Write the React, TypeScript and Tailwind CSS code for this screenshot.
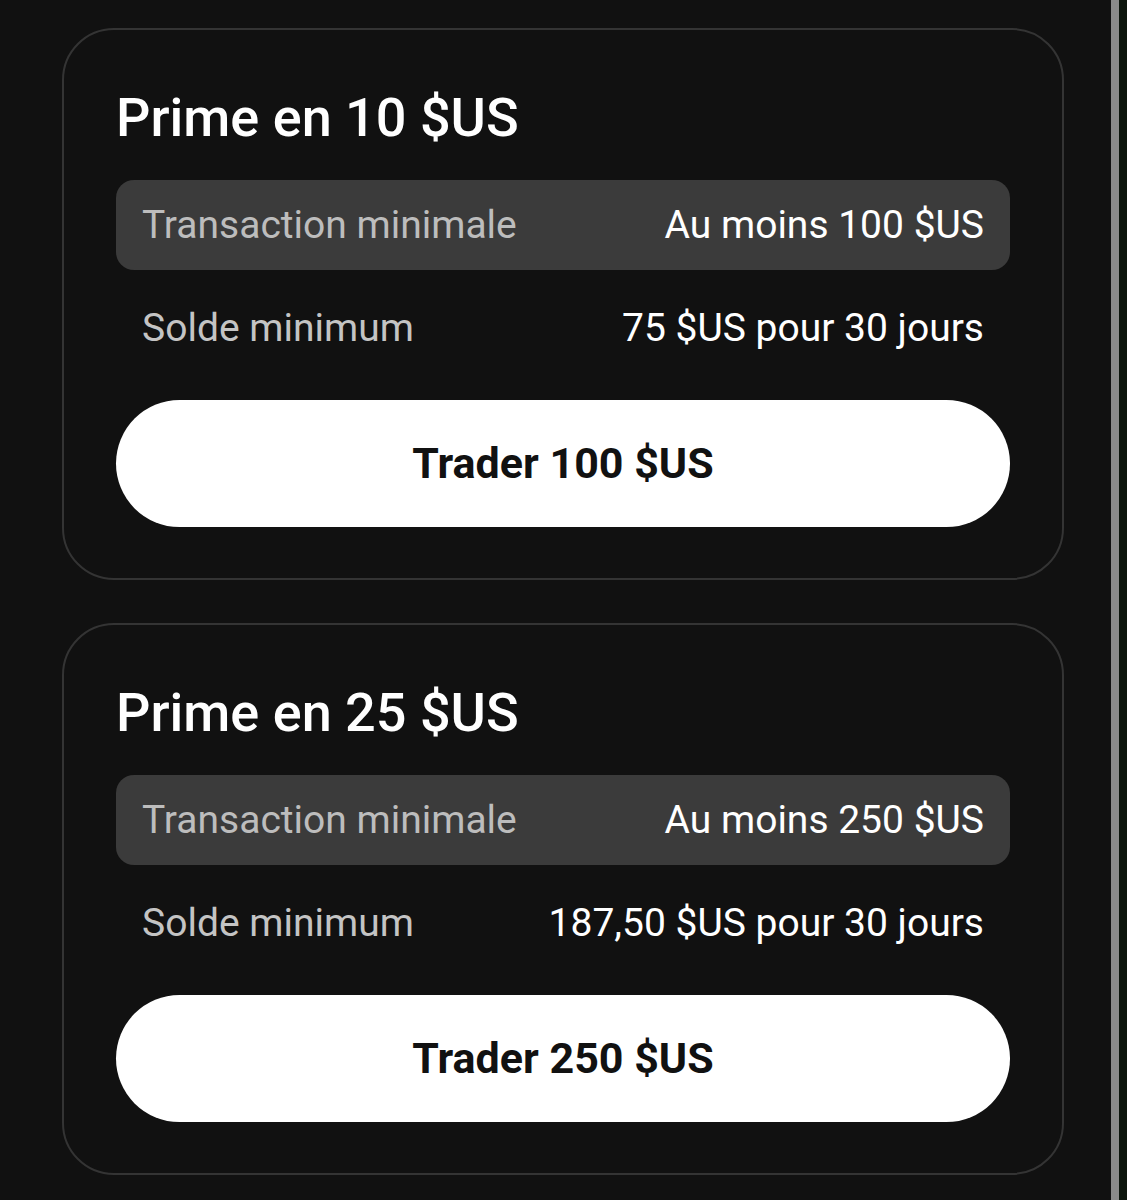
const offers = [
  { bonus: '10', min: 'Au moins 100 $US', balance: '75 $US pour 30 jours', trade: 'Trader 100 $US' },
  { bonus: '25', min: 'Au moins 250 $US', balance: '187,50 $US pour 30 jours', trade: 'Trader 250 $US' },
];

function OfferCard({ offer }: { offer: (typeof offers)[number] }) {
  return (
    <div className="border-2 border-[#343434] rounded-[52px] px-[52px] pt-[56px] pb-[51px]">
      <h2 className="text-[54px] leading-[64px] font-medium text-white">Prime en {offer.bonus} $US</h2>
      <div className="mt-[30px] h-[90px] rounded-[18px] bg-[#3b3b3b] px-[26px] flex items-center justify-between text-[39px]">
        <span className="text-[#bdbdbd]">Transaction minimale</span>
        <span className="text-white">{offer.min}</span>
      </div>
      <div className="h-[116px] px-[26px] flex items-center justify-between text-[39px]">
        <span className="text-[#c4c4c4]">Solde minimum</span>
        <span className="text-white">{offer.balance}</span>
      </div>
      <button className="mt-[14px] w-full h-[127px] rounded-full bg-white text-[#111111] text-[43px] font-bold">
        {offer.trade}
      </button>
    </div>
  );
}

export default function App() {
  return (
    <div className="min-h-[1200px] h-[1200px] bg-[#111111] flex overflow-hidden" style={{ fontFamily: 'Roboto, "Open Sans", sans-serif' }}>
      <main className="flex-1 pl-[62px] pr-[47px] pt-[28px] flex flex-col gap-[43px]">
        {offers.map((o) => (
          <OfferCard key={o.bonus} offer={o} />
        ))}
      </main>
      <div className="w-[8px] bg-[#8a8a8a]" />
      <div className="w-[8px] bg-[#0c150c]" />
    </div>
  );
}
